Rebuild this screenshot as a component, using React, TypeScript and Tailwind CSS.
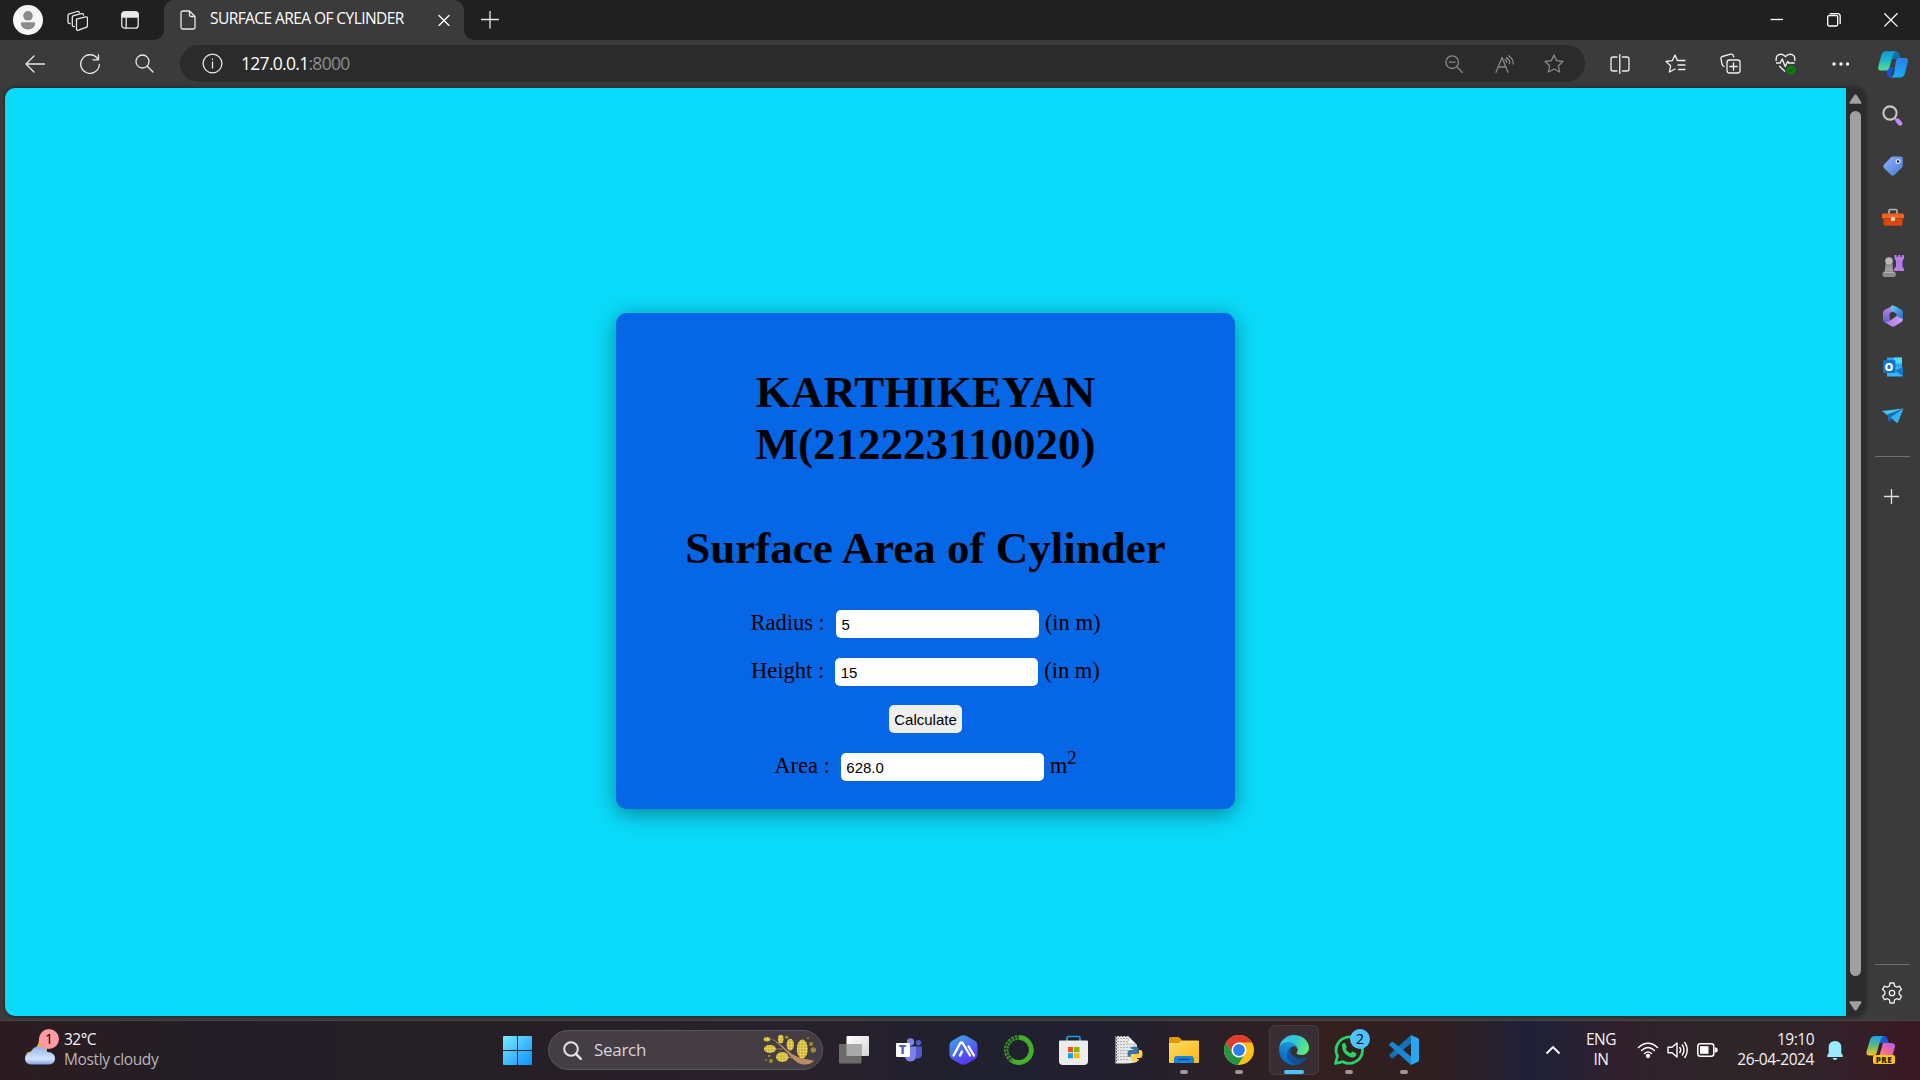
import type { ReactNode } from "react";

const UI = "font-['Open_Sans','Noto_Sans',sans-serif]";

type IconProps = { children: ReactNode; w?: number; h?: number; className?: string };

function Line({ children, w = 20, h = 20, className = "text-[#e8e8e8]" }: IconProps) {
  return (
    <svg
      width={w}
      height={h}
      viewBox={`0 0 ${w} ${h}`}
      fill="none"
      stroke="currentColor"
      strokeWidth="1.3"
      strokeLinecap="round"
      strokeLinejoin="round"
      className={`shrink-0 ${className}`}
    >
      {children}
    </svg>
  );
}

function Art({ children, w = 30, h = 30, vb }: { children: ReactNode; w?: number; h?: number; vb?: string }) {
  return (
    <svg width={w} height={h} viewBox={vb ?? `0 0 ${w} ${h}`} className="shrink-0 overflow-visible">
      {children}
    </svg>
  );
}

function TabStrip() {
  return (
    <div className="flex h-10 items-center bg-[#202020]">
      <div className="ml-[13px] flex w-[30px]">
        <Art>
          <circle cx="15" cy="15" r="15" fill="#f7f7f7" />
          <circle cx="15" cy="10.8" r="4.8" fill="#8b8b8b" />
          <path d="M8 17.2h14v1.6c0 3.4-3 5.6-7 5.6s-7-2.2-7-5.6z" fill="#8b8b8b" />
        </Art>
      </div>
      <div className="ml-6 flex w-[21px]">
        <Line w={21} h={21}>
          <path d="M9.5 9.1l9-2.2q2-.4 2 1.5v7q0 1.5-1.5 2l-7.5 2.8q-2 .7-2-1.4z" />
          <path d="M7.3 16.5q-2 .3-2-1.5V7.3q0-1.3 1.3-1.7L14.500 3.600q2-.3 2 1.600" />
          <path d="M3 13.5q-2 .2-2-1.5V5.5q0-1.300 1.300-1.700L10.300 1.500q1.800-.3 2 1" />
        </Line>
      </div>
      <div className="ml-[33px] flex w-[18px]">
        <Line w={18} h={18}>
          <rect x=".8" y=".8" width="16.4" height="16.4" rx="3" />
          <path d="M1 6V3.500Q1 1 3.500 1h11Q17 1 17 3.500V6z" fill="currentColor" />
          <path d="M5.200 6v11" />
        </Line>
      </div>
      <div className="ml-[15px] flex h-10">
        <div className="w-[10px] bg-[#3b3b3b]">
          <div className="h-10 rounded-br-[10px] bg-[#202020]" />
        </div>
        <div className="flex w-[300px] items-center rounded-t-[10px] bg-[#3b3b3b]">
          <div className="ml-4 flex">
            <Line w={16} h={20}>
              <path d="M1 3Q1 1 3 1h6.500L15 6.500V17q0 2-2 2H3q-2 0-2-2zM9.500 1v4q0 1.500 1.500 1.500h4" />
            </Line>
          </div>
          <div className={`-mt-[2px] ml-[14px] w-[223px] whitespace-nowrap text-[15.5px] tracking-[-0.57px] text-white ${UI}`}>
            SURFACE AREA OF CYLINDER
          </div>
          <Line w={12} h={12} className="ml-[5px] text-white">
            <path d="M1 1.500l10 10M11 1.500l-10 10" />
          </Line>
        </div>
        <div className="w-[10px] bg-[#3b3b3b]">
          <div className="h-10 rounded-bl-[10px] bg-[#202020]" />
        </div>
      </div>
      <Line w={18} h={18} className="ml-[7px] text-[#e8e8e8]">
        <path d="M.5 8.500h17M9 0v17" />
      </Line>
      <div className="ml-auto flex items-center">
        <Line w={14} h={14} className="text-white">
          <path d="M.5 6.500h12.500" strokeLinecap="butt" />
        </Line>
        <Line w={14} h={14} className="ml-[43px] text-white">
          <rect x=".7" y="2.5" width="10" height="10.5" rx="1.5" />
          <path d="M3.200 .7h7.300q2.700 0 2.700 2.700v7" />
        </Line>
        <Line w={14} h={14} className="ml-[43px] mr-[22px] text-white">
          <path d="M.7 .7l12.400 12.400M13.100 .7L.7 13.100" />
        </Line>
      </div>
    </div>
  );
}

function CopilotLogo({ pre }: { pre?: boolean }) {
  return pre ? (
    <div className="relative flex h-[30px] w-[30px]">
      <Art w={30} h={30}>
        <defs>
          <linearGradient id="pa" x1="0" y1="0" x2="0" y2="1">
            <stop offset="0" stopColor="#16a5f2" />
            <stop offset=".5" stopColor="#5fb878" />
            <stop offset="1" stopColor="#f5c518" />
          </linearGradient>
          <linearGradient id="pb" x1="1" y1="0" x2="0" y2="1">
            <stop offset="0" stopColor="#b55cf0" />
            <stop offset=".6" stopColor="#f06a9a" />
            <stop offset="1" stopColor="#ff9a5a" />
          </linearGradient>
        </defs>
        <path d="M8 1h10q2.500 0 3.500 3l1.200 4H14z" fill="#1b55d8" />
        <path d="M17 8h8q5 0 3.800 4.500L26.500 20q-1 2-3 2H13z" fill="url(#pb)" />
        <path d="M8.500 1H18q-2.600 .5-3.600 4L11 17q-1 3.500-4 3.500H3.500Q-.5 20.500 .7 16L4 5q1.300-4 4.500-4z" fill="url(#pa)" />
      </Art>
      <div className="absolute left-[7px] top-5 flex h-[9px] w-[22px] items-center justify-center rounded-[2px] bg-[#ffc60a] font-['Open_Sans',sans-serif] text-[8px] font-extrabold leading-none tracking-[0.5px] text-[#222]">
        PRE
      </div>
    </div>
  ) : (
    <Art w={30} h={27}>
      <defs>
        <linearGradient id="ca" x1="0" y1="0" x2="0" y2="1">
          <stop offset="0" stopColor="#0e9bd8" />
          <stop offset=".45" stopColor="#1cb2c8" />
          <stop offset="1" stopColor="#5be08a" />
        </linearGradient>
        <linearGradient id="cb" x1="0" y1="0" x2="0" y2="1">
          <stop offset="0" stopColor="#2d7de8" />
          <stop offset="1" stopColor="#12b0fb" />
        </linearGradient>
      </defs>
      <path d="M14 .3h4q2.600 0 3.500 3L23 8h-9z" fill="#0a6fa8" />
      <path d="M8 19l8-4-3 11.500Q9.500 26 8.700 23z" fill="#1b4fd8" />
      <path d="M20.500 7H27q3.600 0 2.800 4l-3 11.500q-1 4-5 4h-9q2.300-.5 3.200-4L18 10q.6-3 2.500-3z" fill="url(#cb)" />
      <path d="M8.500 .3H18q-2.300 .5-3.200 4L12 15q-1.200 4.500-4.500 4.500H3Q-.6 19.500 .3 15.500L3.300 4.300q1.100-4 5.200-4z" fill="url(#ca)" />
    </Art>
  );
}

const STAR = "M10 1l2.700 5.700 6.300.8-4.600 4.300 1.200 6.200L10 15l-5.600 3 1.200-6.200L1 7.500l6.300-.8z";

function Toolbar() {
  return (
    <div className="flex h-12 items-start bg-[#3b3b3b]">
      <div className="flex h-[47px] w-[180px] items-center">
        <Line w={20} h={18} className="ml-[25px] text-[#e8e8e8]">
          <path d="M19.500 9H1M9 1L1 9l8 8" />
        </Line>
        <Line w={20} h={20} className="ml-[35px] text-[#e8e8e8]">
          <path d="M19.300 10.500a9.300 9.300 0 1 1-1.600-5.700M18.500 .8v5h-5.500" />
        </Line>
        <Line w={19} h={19} className="ml-[35px] text-[#e8e8e8]">
          <circle cx="7.5" cy="7.5" r="6.5" />
          <path d="M12.300 12.300l5.700 5.700" />
        </Line>
      </div>
      <div className="mt-[5px] flex h-[37px] w-[1405px] items-center rounded-full bg-[#2b2b2b]">
        <Line w={21} h={21} className="ml-[22px] text-[#e8e8e8]">
          <circle cx="10.5" cy="10.5" r="9.4" />
          <path d="M10.500 9v6M10.500 6v.3" />
        </Line>
        <div className={`-mt-px ml-[18px] text-[17.5px] tracking-[-0.71px] text-white ${UI}`}>
          127.0.0.1<span className="text-[#8e8e8e]">:8000</span>
        </div>
        <div className="ml-auto mr-[21px] flex items-center">
          <Line w={18} h={18} className="text-[#8a8a8a]">
            <circle cx="7.2" cy="7.2" r="6.3" />
            <path d="M12 12l5.500 5.500M4.500 7.200h5.500" />
          </Line>
          <Line w={20} h={18} className="ml-8 text-[#8a8a8a]">
            <path d="M1 17.300L7 2.500l6 14.800M3.200 12h7.600M11.500 2.600q3.200 2.200 3.200 5.900M13.500 .8q4.800 3 4.800 8.200" />
            <path d="M10 4.500q1.400 .8 1.600 3" />
          </Line>
          <Line className="ml-[29px] text-[#8a8a8a]">
            <path d={STAR} />
          </Line>
        </div>
      </div>
      <div className="flex h-[47px] flex-1 items-center">
        <Line w={20} h={20} className="ml-[25px] text-[#f0f0f0]">
          <path d="M7 3H3Q1 3 1 5v10q0 2 2 2h4M12.500 3H17q2 0 2 2v10q0 2-2 2h-4.500M9.800 .5v19" />
        </Line>
        <Line w={21} h={20} className="ml-[35px] text-[#f0f0f0]">
          <path d="M12.500 6.700L10 1 7.300 6.700 1 7.500l4.600 4.300L4.400 18l5.600-3M13.500 6.500H20M13 11h7M13.500 15.500H20" />
        </Line>
        <Line w={21} h={21} className="ml-[34px] text-[#f0f0f0]">
          <rect x="7" y="7" width="13" height="13" rx="2.5" />
          <path d="M13.500 9.800v7.400M9.800 13.500h7.400M4 13.500Q2.500 13 2.200 11.500L.9 5.800Q.6 4 2.400 3.500L10.500 1.200Q13 .8 13.500 3l.3 1" />
        </Line>
        <div className="ml-[34px] flex">
          <Art w={22} h={21}>
            <path
              d="M1.200 8Q.5 1.200 6 1.200q2.600 0 4.500 2.500Q12.400 1.200 15 1.200q5.500 0 4.800 6.800M1 10h4.200l2-4 3 7.500 2.500-5 1 1.500h6M4.300 13l5.700 5.500"
              fill="none"
              stroke="#f0f0f0"
              strokeWidth="1.4"
              strokeLinejoin="round"
            />
            <circle cx="16" cy="17" r="4.5" fill="#107c10" />
            <path d="M13.800 17l1.600 1.600 2.700-3" fill="none" stroke="#0b4a0b" />
          </Art>
        </div>
        <div className="ml-[35px] flex">
          <Art w={17} h={6}>
            <g fill="#f4f4f4">
              <circle cx="2" cy="3" r="1.7" />
              <circle cx="9" cy="3" r="1.7" />
              <circle cx="15.5" cy="3" r="1.7" />
            </g>
          </Art>
        </div>
        <div className="ml-auto mr-3 mt-1 flex h-[30px]">
          <CopilotLogo />
        </div>
      </div>
    </div>
  );
}

function Field({ label, value, unit }: { label: string; value: string; unit: ReactNode }) {
  return (
    <div className="flex h-7 items-center justify-center whitespace-pre text-[22.5px] leading-none">
      <span className="-mt-px">{label}</span>
      <input
        readOnly
        value={value}
        className="ml-[11px] mr-[6px] h-7 w-[203px] rounded-[5px] bg-white px-[5.5px] font-['Liberation_Sans',sans-serif] text-[15px] text-black outline-none"
      />
      <span className="-mt-px">{unit}</span>
    </div>
  );
}

function CylinderPage() {
  return (
    <div className="flex flex-1 flex-col items-center overflow-hidden rounded-l-[10px] bg-[#0adbfa] pt-[225px] font-['Liberation_Serif',serif] text-black">
      <div className="flex h-[496px] w-[619px] flex-col items-center rounded-[11px] bg-[#0566e6] pt-[53px] shadow-[0_4.5px_22.5px_rgba(0,0,0,0.4)]">
        <h1 className="text-center text-[45px] font-bold leading-[52px]">
          KARTHIKEYAN
          <br />
          M(212223110020)
        </h1>
        <h1 className="mt-[52px] text-[45px] font-bold leading-[52px]">Surface Area of Cylinder</h1>
        <div className="mt-9 flex flex-col gap-5">
          <Field label="Radius :" value="5" unit="(in m)" />
          <Field label="Height :" value="15" unit="(in m)" />
          <div className="-mt-px flex justify-center">
            <button className="h-7 w-[73px] rounded-[5px] bg-[#efefef] pt-px font-['Liberation_Sans',sans-serif] text-[15px] leading-none text-black">
              Calculate
            </button>
          </div>
          <Field
            label="Area :"
            value="628.0"
            unit={
              <>
                m<span className="relative -top-[9px] text-[18.75px] leading-none">2</span>
              </>
            }
          />
        </div>
      </div>
    </div>
  );
}

function Scrollbar() {
  return (
    <div className="flex w-[19px] flex-col items-center rounded-r-[10px] bg-[#2c2c2c] pt-[6px]">
      <Art w={13} h={10}>
        <path d="M6.500 .5Q7.500 .5 8 1.500l4.500 7q.3 1.200-1 1.200h-10q-1.300 0-1-1.200L5 1.500q.5-1 1.500-1z" fill="#a0a0a0" />
      </Art>
      <div className="mt-[7px] h-[865px] w-[11px] rounded-full bg-[#9f9f9f]" />
      <div className="mt-[25px] flex">
        <Art w={13} h={10}>
          <path d="M6.500 9.500Q7.500 9.500 8 8.500l4.500-7Q12.800 .3 11.500 .3h-10Q.2 .3 .5 1.500L5 8.500q.5 1 1.500 1z" fill="#a0a0a0" />
        </Art>
      </div>
    </div>
  );
}

function SideBar() {
  const cell = "flex h-[50px] shrink-0 items-center justify-center";
  return (
    <div className="flex w-[55px] flex-col">
      <div className={`${cell} mt-[3px]`}>
        <Art w={22} h={22}>
          <path d="M12.500 13l3 3" stroke="#999" strokeWidth="2" />
          <circle cx="8" cy="8" r="6.6" fill="none" stroke="#c8c6c4" strokeWidth="2.1" />
          <path d="M15.500 15.500l2.700 3" stroke="#c58af5" strokeWidth="4.4" strokeLinecap="round" />
        </Art>
      </div>
      <div className={cell}>
        <Art w={20} h={20}>
          <defs>
            <linearGradient id="tg" x1="0" y1="0" x2="1" y2="1">
              <stop offset="0" stopColor="#8ab4f8" />
              <stop offset="1" stopColor="#4a78d8" />
            </linearGradient>
          </defs>
          <path d="M10 .5h7.500q2.300 0 2.300 2.300V9.500q0 1.200-1 2.200l-7.500 7.400q-1.600 1.500-3.200 0L.9 12q-1.500-1.600 0-3.200L8 1.300Q8.800 .5 10 .5z" fill="url(#tg)" />
          <circle cx="15" cy="5.5" r="1.9" fill="#222" stroke="#dbe8ff" strokeWidth="1.2" />
        </Art>
      </div>
      <div className={`${cell} mt-[1px]`}>
        <Art w={22} h={18}>
          <path d="M7 6V3q0-1.500 1.500-1.500h5Q15 1.500 15 3v3" fill="none" stroke="#b8b8b8" strokeWidth="1.6" />
          <path d="M1.500 10h19v6q0 1.800-1.800 1.800H3.300q-1.800 0-1.800-1.800z" fill="#d9480f" />
          <path d="M1.500 5.500h19q1.500 0 1.500 1.500v3.500H0V7q0-1.500 1.500-1.500z" fill="#f0641e" />
          <path d="M0 10.500h22" stroke="#b83a0a" />
          <circle cx="11" cy="11" r="2.3" fill="#cfcfcf" />
        </Art>
      </div>
      <div className={`${cell} -mt-px`}>
        <Art w={22} h={22}>
          <path d="M12.500 0h2v1.800h1.700V0h2.200v1.800h1.600V0h2v3.500L20.500 6v5.500L22 14v2H12v-2l2-2.500V6l-1.500-2.500z" fill="#b57be8" />
          <path d="M4 8h6l1.500 9h-9z" fill="#9c9c9c" />
          <circle cx="7" cy="6" r="3.8" fill="#b8b8b8" />
          <rect x="3" y="9.5" width="8" height="2" rx="1" fill="#8a8a8a" />
          <path d="M.5 18.500Q.5 16.500 3 16.500h8q2.500 0 2.800 2V20q0 2-2 2H2.500q-2 0-2-2z" fill="#8c8c8c" />
          <path d="M2 17.500h10" stroke="#b0b0b0" />
        </Art>
      </div>
      <div className={cell}>
        <Art w={20} h={22}>
          <defs>
            <linearGradient id="ma" x1="0" y1="0" x2="0" y2="1">
              <stop offset="0" stopColor="#c58be8" />
              <stop offset="1" stopColor="#5a5fd0" />
            </linearGradient>
            <linearGradient id="mb" x1="0" y1="0" x2="1" y2="1">
              <stop offset="0" stopColor="#63d0f5" />
              <stop offset="1" stopColor="#2b60c8" />
            </linearGradient>
            <linearGradient id="mc" x1="0" y1="0" x2="1" y2="0">
              <stop offset="0" stopColor="#a87be0" />
              <stop offset="1" stopColor="#c9a0f5" />
            </linearGradient>
          </defs>
          <path d="M10 .5L1.500 5Q0 6 0 7.500v7Q0 16.500 1.500 17L7 17.500 6.500 8.500 10 6z" fill="url(#ma)" />
          <path d="M8 .8Q10 0 12 1l6.500 3.800Q20 5.600 20 7.500v7L13.500 11V8.500L8 6z" fill="url(#mb)" />
          <path d="M13.500 11l6.500 3q0 2-1.500 3L12 21q-2 1-4 0l-6.500-4q3 .3 5-1z" fill="url(#mc)" />
        </Art>
      </div>
      <div className={`${cell} mt-[1px]`}>
        <div className="relative flex">
          <Art w={20} h={20}>
            <rect x="4" y=".5" width="15" height="12" rx="1" fill="#28a8ea" />
            <rect x="11" y=".5" width="8" height="6" fill="#50d9ff" />
            <path d="M4 10h16v8q0 1.500-1.500 1.500H4z" fill="#35b8f1" />
            <path d="M20 9.500v9.500L12 14z" fill="#1678c8" />
            <rect x="0" y="3" width="12.5" height="13" rx="1.5" fill="#0f72cf" />
          </Art>
          <span className="absolute left-[2px] top-[2px] font-['Open_Sans',sans-serif] text-[11px] font-extrabold leading-[15px] text-white">
            O
          </span>
        </div>
      </div>
      <div className={`${cell} -mt-px`}>
        <Art w={22} h={16}>
          <path d="M21.500 .5L0 3l5 4z" fill="#4cc2f0" />
          <path d="M21.500 .5L5 7l2 7z" fill="#0f6fbe" />
          <path d="M21.500 .5L7 14l3-3.500z" fill="#0a4f90" />
          <path d="M21.500 .5L8.500 9.500l7 6z" fill="#35b0ee" />
        </Art>
      </div>
      <div className="mx-[10px] mt-[15px] h-px shrink-0 bg-[#6f6f6f]" />
      <div className="mt-[32px] flex justify-center pr-[2px]">
        <Line w={15} h={15} className="text-[#e0e0e0]">
          <path d="M0 7.500h15M7.500 0v15" />
        </Line>
      </div>
      <div className="mx-[10px] mb-[17px] mt-auto h-px shrink-0 bg-[#6f6f6f]" />
      <div className="mb-4 flex justify-center pr-px">
        <Line w={22} h={22} className="text-[#f0f0f0]">
          <path d="M9 1h4l.6 3 2 1.100 2.900-1 2 3.500-2.300 2v2.600l2.300 2-2 3.500-2.900-1-2 1.100L13 21H9l-.6-3.200-2-1.100-2.900 1-2-3.500 2.300-2V9.600l-2.300-2 2-3.500 2.900 1 2-1.100z" />
          <circle cx="11" cy="11" r="2.7" />
        </Line>
      </div>
    </div>
  );
}

function Cell({ children, run }: { children: ReactNode; run?: boolean }) {
  return (
    <div className="relative flex h-[50px] w-[55px] shrink-0 items-center justify-center">
      {children}
      {run && <div className="absolute bottom-px h-1 w-2 rounded-full bg-[#9b9799]" />}
    </div>
  );
}

const BLOSSOMS = [
  [4, 4.3, 3.2, 2.2],
  [17.7, 4, 2.8, 4.2],
  [7, 14, 6, 3.9],
  [27.3, 9.7, 3.7, 5.9],
  [39.3, 14, 5.4, 9.6],
  [19.3, 22, 6.2, 4.9],
];

const POLLEN = [
  [23.7, 2.3, 1.7],
  [45, 3.3, 1],
  [48, 9, 2],
  [50.3, 15, 2.8],
  [6.3, 21, 1.2],
  [8, 26, 2.1],
  [3, 25, 1],
];

function SearchBox() {
  return (
    <div className="flex h-10 w-[275px] items-center rounded-full border border-[#5b555c] bg-[#443d44]">
      <svg
        width="19"
        height="19"
        viewBox="0 0 19 19"
        fill="none"
        stroke="#e4e2e4"
        strokeWidth="2"
        strokeLinecap="round"
        className="ml-[14px]"
      >
        <circle cx="8" cy="8" r="6.8" />
        <path d="M13 13l4.800 4.800" strokeWidth="2.5" />
      </svg>
      <span className={`-mt-px ml-3 text-[17px] tracking-[-0.3px] text-[#d8d4d8] ${UI}`}>Search</span>
      <div className="ml-auto mr-[6px] flex">
        <Art w={53} h={30}>
          <defs>
            <pattern id="bud" width="3" height="3" patternUnits="userSpaceOnUse">
              <circle cx="1.5" cy="1.5" r="1" fill="#efe06a" />
            </pattern>
          </defs>
          <path d="M6.500 2.500Q16 7 24 15q8 8.500 27 10.500-3 4.500-11 4-6-1-11-6.500Q17 9 6.500 2.500z" fill="#b98c68" />
          <path d="M10 14h10M24 22l6 1M27 13l-2 5M39 22v4" stroke="#a67b5a" strokeWidth="1" />
          {BLOSSOMS.map(([x, y, rx, ry]) => (
            <g key={`${x}-${y}`}>
              <ellipse cx={x} cy={y} rx={rx} ry={ry} fill="#cdb534" />
              <ellipse cx={x} cy={y} rx={rx} ry={ry} fill="url(#bud)" />
            </g>
          ))}
          {POLLEN.map(([x, y, r]) => (
            <circle key={`${x}-${y}`} cx={x} cy={y} r={r} fill="#9c8c34" />
          ))}
        </Art>
      </div>
    </div>
  );
}

function EdgeLogo() {
  return (
    <Art vb="0 0 256 256">
      <defs>
        <linearGradient id="e1" x1="0" y1=".5" x2="1" y2=".5">
          <stop offset="0" stopColor="#0c59a4" />
          <stop offset="1" stopColor="#114a8b" />
        </linearGradient>
        <linearGradient id="e2" x1=".6" y1="0" x2=".3" y2="1">
          <stop offset="0" stopColor="#1b9de2" />
          <stop offset=".6" stopColor="#0f76ca" />
          <stop offset="1" stopColor="#0669bc" />
        </linearGradient>
        <linearGradient id="e3" x1="0" y1=".3" x2="1" y2=".6">
          <stop offset="0" stopColor="#35c1f1" />
          <stop offset=".5" stopColor="#2fc9d0" />
          <stop offset="1" stopColor="#66eb6e" />
        </linearGradient>
      </defs>
      <path d="M231.070 190.540c-3.380 1.760-6.900 3.260-10.510 4.480a101.870 101.870 0 0 1-35.790 6.430c-47.180 0-88.280-32.450-88.280-74.100.08-11.360 6.300-21.760 16.150-27.250-42.670 1.790-53.640 46.260-53.640 72.310 0 73.670 67.900 81.140 82.530 81.140 7.890 0 19.790-2.300 26.930-4.550l1.300-.440a128.340 128.340 0 0 0 66.600-52.800 4 4 0 0 0-5.290-5.220z" fill="url(#e1)" />
      <path d="M105.730 241.420A79.200 79.200 0 0 1 83 220.080a80.720 80.720 0 0 1 29.530-120c3.120-1.470 8.450-4.130 15.540-4a32.350 32.350 0 0 1 25.690 13 31.880 31.880 0 0 1 6.360 18.660c0-.210 24.460-79.600-80-79.600-43.900 0-80 41.660-80 78.210a130.150 130.150 0 0 0 12.110 56 128 128 0 0 0 156.380 67.110 75.550 75.550 0 0 1-62.780-8.040z" fill="url(#e2)" />
      <path d="M152.290 148.860c-.810 1.050-3.300 2.500-3.300 5.660 0 2.610 1.700 5.120 4.720 7.230 14.380 10 41.490 8.680 41.560 8.680a59.560 59.560 0 0 0 30.270-8.350 61.380 61.380 0 0 0 30.430-52.880c.260-22.410-8-37.310-11.340-43.910C223.440 23.840 177.700 0 127.960 0a128 128 0 0 0-128 126.200c.480-36.540 36.800-66.050 80-66.050 3.500 0 23.460.340 42 10.070 16.340 8.580 24.900 18.940 30.850 29.210 6.180 10.670 7.280 24.150 7.280 29.520s-2.740 13.330-7.800 19.910z" fill="url(#e3)" />
    </Art>
  );
}

function TaskIcons() {
  return (
    <div className="-mt-px ml-[3px] flex">
      <Cell>
        <Art w={30} h={28}>
          <defs>
            <linearGradient id="tv" x1="0" y1="0" x2="1" y2="1">
              <stop offset="0" stopColor="#fff" />
              <stop offset="1" stopColor="#d4d4d4" />
            </linearGradient>
          </defs>
          <rect x="7.5" y="0" width="22.5" height="20" rx="1" fill="url(#tv)" />
          <rect x="0" y="8" width="22.5" height="19.5" rx="1" fill="#6c6c6c" />
          <rect x="7.5" y="8" width="15" height="12" fill="#a9a9a9" />
        </Art>
      </Cell>
      <Cell>
        <div className="relative flex">
          <Art w={26} h={24}>
            <circle cx="14.5" cy="4" r="3.7" fill="#7b83eb" />
            <circle cx="22.5" cy="4.8" r="2.7" fill="#5059c9" />
            <path d="M18 8.500h8V16q0 4.500-5 4.500h-3z" fill="#5059c9" />
            <path d="M10 8.500h10V17q0 6.500-5.500 6.500Q10 23.500 9 19z" fill="#7b83eb" />
            <rect x="0" y="5" width="14" height="14" rx="1" fill="#fff" />
          </Art>
          <span className="absolute left-0 top-[5px] w-[14px] text-center font-['Open_Sans',sans-serif] text-[12px] font-extrabold leading-[14px] text-[#5059c9]">
            T
          </span>
        </div>
      </Cell>
      <Cell>
        <Art w={29} h={30}>
          <defs>
            <linearGradient id="ai" x1=".2" y1="0" x2=".7" y2="1">
              <stop offset="0" stopColor="#3fa4ee" />
              <stop offset="1" stopColor="#5b2df0" />
            </linearGradient>
          </defs>
          <path d="M11 1.200q3.500-2 7 0l7 4Q28.500 7 28.500 11v8q0 4-3.500 5.800l-7 4q-3.500 2-7 0l-7-4Q.5 23 .5 19v-8Q.5 7 4 5.200z" fill="url(#ai)" />
          <path d="M4.500 20.500L11 8.500q1.500-2 3 0l7 12M11 20.500l2-4M19.500 11.500l5.500 9" fill="none" stroke="#fff" strokeWidth="2.3" strokeLinecap="round" strokeLinejoin="round" />
        </Art>
      </Cell>
      <Cell>
        <Art>
          <path d="M15 2.500A12.500 12.500 0 1 1 8 25.500" fill="none" stroke="#43b02a" strokeWidth="5" />
          <path d="M8 25.500A12.500 12.500 0 0 1 15 2.500" fill="none" stroke="#3a9a26" strokeWidth="4.6" strokeDasharray="2.500 1" />
          <path d="M8 25.500A12.500 12.500 0 0 1 13 2.500" fill="none" stroke="#22222c" strokeWidth="1" strokeDasharray="2 1.500" />
        </Art>
      </Cell>
      <Cell>
        <Art w={29} h={30}>
          <path d="M8 6V3q0-1.500 1.500-1.500h10Q21 1.500 21 3v3" fill="none" stroke="#1ba0e8" strokeWidth="1.7" />
          <path d="M1 5.500h27q1 0 1 1V26q0 4-4 4H4q-4 0-4-4V6.500q0-1 1-1z" fill="#ececec" />
          <path d="M9 12h5v5.200H9z" fill="#f25022" />
          <path d="M15 12h5.500v5.200H15z" fill="#7fba00" />
          <path d="M9 18.200h5v5H9z" fill="#00a4ef" />
          <path d="M15 18.200h5.500v5H15z" fill="#ffb900" />
        </Art>
      </Cell>
      <Cell>
        <Art w={28} h={30}>
          <path d="M.5 1H13l9 9v17q-8 2-21.500 1.500z" fill="#e6e6e6" />
          <path d="M13 1q1 5-.5 8 4-1 9.500 1z" fill="#fff" stroke="#999" strokeWidth=".6" />
          <path d="M2 3.500h10M2 6.500h10M2 9.500h10M2 12.500h17M2 15.500h11M2 18.500h10M2 21.500h11M2 24.500h12" stroke="#a5a5a5" strokeWidth=".8" strokeDasharray="2 1" />
          <path d="M1.500 1v27M1 1.500h11" stroke="#555" strokeDasharray="1.500 1.500" />
          <path d="M15.500 13.500q0-2 4-2t4 2V17q0 2-2 2h-4q-2 0-2 2.500V22h-1q-2 0-2-3.500t2.500-3.500h4.500" fill="#3873a3" />
          <path d="M24 15h1.500q2 0 2 4t-2.500 4h-4v1h3q0 2.500-4 2.500t-4-2.500v-3q0-2 2-2h4q2 0 2-2z" fill="#ffcf45" />
        </Art>
      </Cell>
      <Cell run>
        <Art w={30} h={26}>
          <defs>
            <linearGradient id="fo" x1="0" y1="0" x2="1" y2="1">
              <stop offset="0" stopColor="#ffd968" />
              <stop offset="1" stopColor="#f9b90f" />
            </linearGradient>
          </defs>
          <path d="M0 1.500Q0 0 1.500 0H9q1.500 0 2.500 1.500L13 3.500V8H0z" fill="#dd9b0a" />
          <path d="M0 6h9.500q1 0 2-1.200Q12.500 3.500 14 3.500h15q1 0 1 1V25q0 1-1 1H1q-1 0-1-1z" fill="url(#fo)" />
          <path d="M5 26v-4q0-3 3-3h14q3 0 3 3v4z" fill="#1a80d8" />
          <path d="M9 22.500h12" stroke="#0b4f92" strokeWidth="1.3" />
        </Art>
      </Cell>
      <Cell run>
        <Art>
          <circle cx="15" cy="15" r="15" fill="#fbc116" />
          <path d="M2 7.500A15 15 0 0 1 28 7.500H15L9 19z" fill="#e33b2e" />
          <path d="M2 7.500A15 15 0 0 0 14 30l7-11.500-6 3.500-6.200-3.500z" fill="#269447" />
          <circle cx="15" cy="15" r="7.5" fill="#fff" />
          <circle cx="15" cy="15" r="5.9" fill="#2f7de9" />
        </Art>
      </Cell>
      <div className="flex w-[55px] justify-center">
        <div className="relative flex h-[50px] w-[50px] items-center justify-center rounded-[6px] border border-[#463b40] bg-[#382e34]">
          <EdgeLogo />
          <div className="absolute bottom-0 h-1 w-5 rounded-full bg-[#4cc2ff]" />
        </div>
      </div>
      <Cell run>
        <Art>
          <path d="M1.500 28.500l2-7.500A13.200 13.200 0 1 1 9 26.700z" fill="none" stroke="#25d366" strokeWidth="2.8" strokeLinejoin="round" />
          <path d="M8 9.500q1.500-2.500 3-1.500l1.700 3.700q.2.800-1 2.300 1.600 3 5 4.300 1.500-2 2-1.800l3.600 1.800q.3 3-2.500 4-3 1-8-2.800-4.300-3.700-3.800-10z" fill="#25d366" />
        </Art>
        <div className="absolute left-[29px] top-1 flex h-5 w-5 items-center justify-center rounded-full bg-[#4cc2ff] font-['Open_Sans',sans-serif] text-[14px] leading-none text-black">
          2
        </div>
      </Cell>
      <Cell run>
        <Art>
          <path d="M22 0v8.500L4 23q-.8 .5-1.500 0L.5 21q-.8-.8 0-1.500z" fill="#1272b8" />
          <path d="M22 30v-8.500L4 7q-.8-.5-1.500 0L.5 9q-.8.800 0 1.500z" fill="#1b87d2" />
          <path d="M22 0l7 3.300q1 .5 1 1.700v20q0 1.200-1 1.700L22 30z" fill="#2aa5f0" />
        </Art>
      </Cell>
    </div>
  );
}

function Taskbar() {
  const txt = `text-[15.5px] leading-5 text-[#f4f2f3] tracking-[-0.5px] ${UI}`;
  return (
    <div className="h-[60px] border-t border-[#4a4648] bg-[linear-gradient(90deg,#2c1c20_0,#231e26_200px,#261f26_520px,#29212b_800px,#20202e_960px,#222030_1100px,#33201f_1320px,#2f1f21_1440px,#1f2139_1530px,#31202c_1620px,#2d2628_1730px,#32222a_1830px,#3a1823_1920px)]">
      <div className="flex h-[59px] items-center">
        <div className="relative ml-[25px] flex w-[30px]">
          <Art w={30} h={30}>
            <defs>
              <linearGradient id="cl" x1="0" y1="0" x2="0" y2="1">
                <stop offset="0" stopColor="#8fb2ee" />
                <stop offset=".7" stopColor="#d5e4fb" />
                <stop offset="1" stopColor="#7ea0e0" />
              </linearGradient>
            </defs>
            <path d="M14 1q1 12-13 16 6 6 15 2 8-4 6-10z" fill="#f7a928" />
            <path d="M7 28.500q-7 0-7-6 0-5.500 6-6Q7.500 10.500 14 10.500t8.500 5.500Q30 16.500 30 22.500q0 6-7 6z" fill="url(#cl)" />
          </Art>
          <div className={`absolute -top-[7px] left-[14px] flex h-5 w-5 items-center justify-center rounded-full bg-[#ff99a4] text-[14px] leading-none text-black ${UI}`}>
            1
          </div>
        </div>
        <div className={`-mt-[3px] ml-[9px] w-[439px] ${txt}`}>
          <div>32°C</div>
          <div className="tracking-[-0.38px] text-[#b9b5b8]">Mostly cloudy</div>
        </div>
        <Art w={29} h={29}>
          <defs>
            <linearGradient id="wi" x1="0" y1="0" x2="29" y2="29" gradientUnits="userSpaceOnUse">
              <stop offset="0" stopColor="#7cecff" />
              <stop offset="1" stopColor="#0a90fb" />
            </linearGradient>
          </defs>
          <path d="M0 1q0-1 1-1h13v14H0zM15 0h13q1 0 1 1v13H15zM0 15h14v14H1q-1 0-1-1zM15 15h14v13q0 1-1 1H15z" fill="url(#wi)" />
        </Art>
        <div className="-mt-px ml-4 flex">
          <SearchBox />
        </div>
        <TaskIcons />
        <div className="-mt-px ml-auto flex items-center">
          <svg width="16" height="10" viewBox="0 0 16 10" fill="none" stroke="#fff" strokeWidth="1.9">
            <path d="M1.500 8.500L8 2l6.500 6.500" />
          </svg>
          <div className={`-mt-[2px] ml-5 w-10 text-center ${txt}`}>
            <div>ENG</div>
            <div>IN</div>
          </div>
          <Line w={22} h={18} className="ml-4 text-white">
            <path d="M1.500 6.500q9.500-8.500 19 0M4.500 9.500q6.500-6 13 0M7.500 12.500q3.500-3 7 0" strokeWidth="1.6" />
            <circle cx="11" cy="15" r="1.5" fill="currentColor" />
          </Line>
          <Line w={22} h={20} className="ml-2 text-white">
            <path d="M1 7.200v5.600h4l5 4.200V3L5 7.200zM12.800 7.500q1.700 2.500 0 5M15.300 5q3.400 5 0 10M17.800 2.500q5 7.500 0 15" strokeWidth="1.4" />
          </Line>
          <Line w={21} h={14} className="ml-2 text-white">
            <rect x=".8" y=".8" width="16" height="12.4" rx="2.5" strokeWidth="1.5" />
            <rect x="3" y="3.2" width="8.5" height="7.6" fill="currentColor" stroke="none" />
            <path d="M18.500 5v4l1.500-1V6z" fill="currentColor" />
          </Line>
          <div className={`-mt-[2px] ml-4 w-[80px] whitespace-nowrap text-right ${txt}`}>
            <div>19:10</div>
            <div className="tracking-[-0.42px]">26-04-2024</div>
          </div>
          <div className="ml-[13px] mt-px flex">
            <Art w={16} h={20}>
              <path d="M8 0q6.300 0 6.300 6.500V12l1.700 3q0 1-1 1H1q-1 0-1-1l1.700-3V6.500Q1.700 0 8 0zM5.500 17h5q-.5 2-2.500 2t-2.500-2z" fill="#9bebff" />
            </Art>
          </div>
          <div className="ml-[23px] mr-6 flex">
            <CopilotLogo pre />
          </div>
        </div>
      </div>
    </div>
  );
}

export default function App() {
  return (
    <div className="flex h-[1080px] w-[1920px] flex-col overflow-hidden bg-[#3b3b3b]">
      <TabStrip />
      <Toolbar />
      <div className="flex h-[932px] bg-[#3b3b3b]">
        <div className="mb-1 ml-[5px] flex h-[928px] w-[1860px] rounded-[10px] shadow-[0_0_4px_rgba(0,0,0,0.5)]">
          <CylinderPage />
          <Scrollbar />
        </div>
        <SideBar />
      </div>
      <Taskbar />
    </div>
  );
}
